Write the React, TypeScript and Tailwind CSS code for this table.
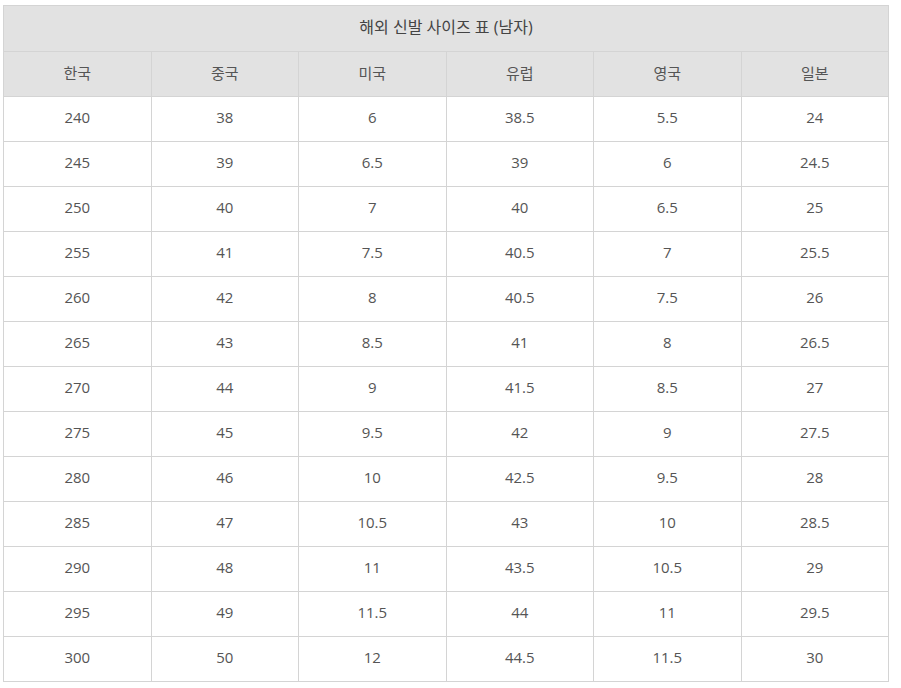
const headers = ["한국", "중국", "미국", "유럽", "영국", "일본"];

const rows: string[][] = [
  ["240", "38", "6", "38.5", "5.5", "24"],
  ["245", "39", "6.5", "39", "6", "24.5"],
  ["250", "40", "7", "40", "6.5", "25"],
  ["255", "41", "7.5", "40.5", "7", "25.5"],
  ["260", "42", "8", "40.5", "7.5", "26"],
  ["265", "43", "8.5", "41", "8", "26.5"],
  ["270", "44", "9", "41.5", "8.5", "27"],
  ["275", "45", "9.5", "42", "9", "27.5"],
  ["280", "46", "10", "42.5", "9.5", "28"],
  ["285", "47", "10.5", "43", "10", "28.5"],
  ["290", "48", "11", "43.5", "10.5", "29"],
  ["295", "49", "11.5", "44", "11", "29.5"],
  ["300", "50", "12", "44.5", "11.5", "30"],
];

export default function App() {
  return (
    <div className="min-h-screen bg-white pl-[3px] pt-[5px] font-['Open_Sans','Noto_Sans_CJK_KR',sans-serif] text-[15px] text-[#555]">
      <table className="w-[886px] table-fixed border-collapse text-center">
        <thead>
          <tr className="h-[46px] bg-[#e2e2e2]">
            <th colSpan={6} className="border border-[#d4d4d4] pb-[3px] text-[16px] font-normal text-[#444]">
              해외 신발 사이즈 표 (남자)
            </th>
          </tr>
          <tr className="h-[45px] bg-[#e2e2e2]">
            {headers.map((h) => (
              <th key={h} className="border border-[#d4d4d4] pb-[2px] font-normal">
                {h}
              </th>
            ))}
          </tr>
        </thead>
        <tbody>
          {rows.map((r, i) => (
            <tr key={i} className="h-[45px]">
              {r.map((c, j) => (
                <td key={j} className="border border-[#d4d4d4] pb-[3px]">
                  {c}
                </td>
              ))}
            </tr>
          ))}
        </tbody>
      </table>
    </div>
  );
}
